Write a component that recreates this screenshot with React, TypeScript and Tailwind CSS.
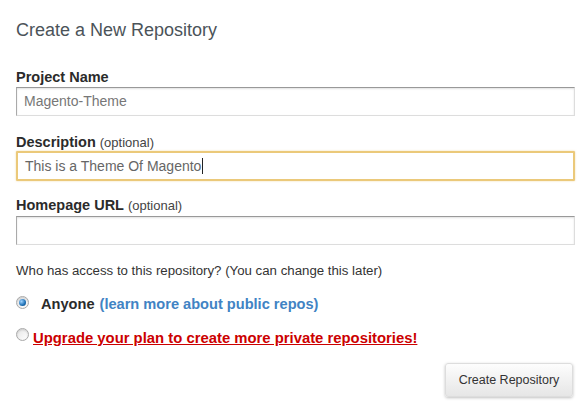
import React from 'react';

// Radio dot drawn with CSS gradients, old Windows-style
function Radio({ checked }: { checked?: boolean }) {
  return (
    <span className="relative inline-block h-[13px] w-[13px] shrink-0 rounded-full border border-[#a9a9a9] bg-gradient-to-br from-[#e6e6e6] to-[#ffffff] shadow-[inset_0_1px_2px_rgba(0,0,0,0.15)]">
      {checked && (
        <span className="absolute left-[2px] top-[2px] h-[7px] w-[7px] rounded-full bg-[radial-gradient(circle_at_35%_35%,#9fd3ff,#1c6fb5_60%,#0f3f6e)]" />
      )}
    </span>
  );
}

function Label({ name, optional }: { name: string; optional?: boolean }) {
  return (
    <div className="h-4 text-[14.5px] leading-4 font-bold text-[#2b2b2b]">
      {name}
      {optional && <span className="ml-1 text-[13px] font-normal text-[#444]">(optional)</span>}
    </div>
  );
}

export default function App() {
  return (
    <div className="min-h-[412px] w-[587px] bg-white pl-4 pr-3 font-['Liberation_Sans',Arial,sans-serif] text-[#333]">
      <h1 className="pt-[18px] text-[18px] leading-6 font-normal text-[#4b5359]">Create a New Repository</h1>

      <div className="mt-[27px]">
        <Label name="Project Name" />
        <div className="mt-[2px] flex h-[29px] items-center border border-[#ddd] border-t-[#999] border-l-[#aaa] pl-[7px] text-[14px] text-[#777] shadow-[inset_0_1px_2px_rgba(0,0,0,0.12)]">
          Magento-Theme
        </div>
      </div>

      <div className="mt-[18px]">
        <Label name="Description" optional />
        <div className="mt-[1px] flex h-[30px] items-center rounded-[1px] border-2 border-[#ebc97a] pl-[7px] text-[14px] text-[#666] shadow-[0_0_2px_rgba(230,190,100,0.6)]">
          This is a Theme Of Magento
          <span className="ml-[1px] inline-block h-[16px] w-px bg-[#222]" />
        </div>
      </div>

      <div className="mt-[16px]">
        <Label name="Homepage URL" optional />
        <div className="mt-[3px] h-[29px] border border-[#ddd] border-t-[#999] border-l-[#aaa] shadow-[inset_0_1px_2px_rgba(0,0,0,0.12)]" />
      </div>

      <p className="mt-[18px] h-4 text-[13.25px] leading-4 text-[#333]">
        Who has access to this repository? (You can change this later)
      </p>

      <div className="mt-[17px] flex h-4 items-center">
        <span className="-mt-[1px]">
          <Radio checked />
        </span>
        <span className="ml-[12px] text-[14.6px] leading-4 font-bold text-[#2b2b2b]">Anyone</span>
        <a className="ml-[5px] text-[14.6px] leading-4 font-bold text-[#4183c4]">(learn more about public repos)</a>
      </div>

      <div className="mt-[18px] flex h-4 items-center">
        <span className="-mt-[4px]">
          <Radio />
        </span>
        <a className="ml-[4px] text-[14.85px] leading-4 font-bold text-[#cc0000] underline">
          Upgrade your plan to create more private repositories!
        </a>
      </div>

      <div className="mt-[17px] flex justify-end pr-[2px]">
        <button className="h-[34px] w-[128px] rounded-[3px] border border-[#ddd] bg-gradient-to-b from-[#fdfdfd] to-[#e6e6e6] text-[12.5px] text-[#333] shadow-[0_1px_3px_rgba(0,0,0,0.25)]">
          Create Repository
        </button>
      </div>
    </div>
  );
}
